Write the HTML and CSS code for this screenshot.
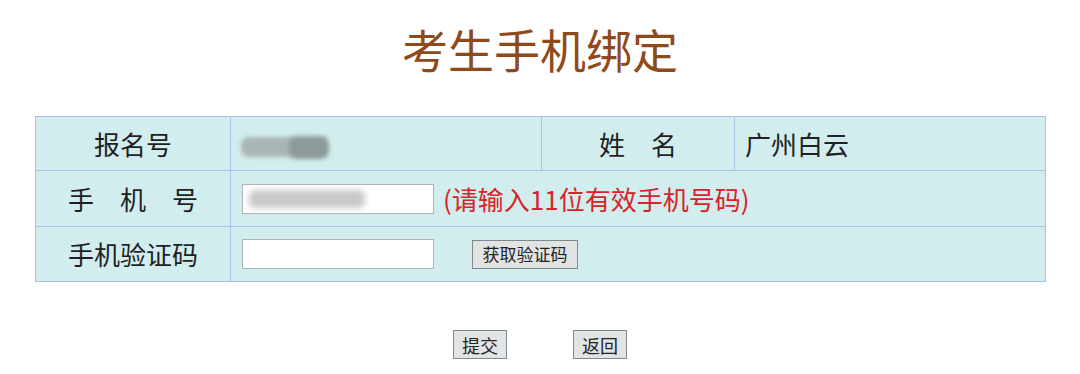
FILE: index.html
```html
<!DOCTYPE html>
<html lang="zh-CN">
<head>
<meta charset="utf-8">
<title>考生手机绑定</title>
<link rel="stylesheet" href="styles.css">
</head>
<body>
<h1 class="title">考生手机绑定</h1>
<table class="form">
  <colgroup>
    <col class="c1"><col class="c2"><col class="c3"><col class="c4">
  </colgroup>
  <tr class="r1">
    <td class="label">报名号</td>
    <td class="value"><span class="blur-id"><span class="blur-a"></span><span class="blur-b"></span></span></td>
    <td class="label">姓　名</td>
    <td class="value">广州白云</td>
  </tr>
  <tr class="r2">
    <td class="label">手　机　号</td>
    <td class="value" colspan="3">
      <div class="line">
        <div class="input"><span class="blur-phone"></span></div>
        <span class="hint">(请输入11位有效手机号码)</span>
      </div>
    </td>
  </tr>
  <tr class="r3">
    <td class="label">手机验证码</td>
    <td class="value" colspan="3">
      <div class="line">
        <div class="input"></div>
        <button class="btn btn-code" type="button">获取验证码</button>
      </div>
    </td>
  </tr>
</table>
<div class="actions">
  <button class="btn btn-act" type="button">提交</button>
  <button class="btn btn-act" type="button">返回</button>
</div>
</body>
</html>
```
FILE: styles.css
```css
html, body {
  margin: 0;
  padding: 0;
  background: #ffffff;
}
body {
  font-family: "Noto Sans CJK SC", "Noto Sans", sans-serif;
  color: #222222;
}
.title {
  margin: 0;
  padding-top: 20px;
  font-size: 46px;
  line-height: 56px;
  font-weight: normal;
  text-align: center;
  color: #8f4a1c;
}
.form {
  margin: 40px 0 0 35px;
  width: 1010px;
  border-collapse: collapse;
  table-layout: fixed;
  background: #d2eded;
  border: 1px solid #b3c6dc;
}
.c1 { width: 195px; }
.c2 { width: 311px; }
.c3 { width: 193px; }
.c4 { width: 311px; }
.form td {
  border: 1px solid #aac0e6;
  padding: 0;
  font-size: 26px;
  line-height: 30px;
}
.r1 td { height: 53px; }
.r2 td { height: 55px; }
.r3 td { height: 54px; }
.label {
  text-align: center;
  color: #1f1f1f;
}
.value {
  padding-left: 10px !important;
  color: #222222;
}
.blur-id {
  display: inline-block;
  position: relative;
  width: 90px;
  height: 24px;
  vertical-align: middle;
}
.blur-a, .blur-b {
  position: absolute;
  top: 2px;
  height: 20px;
  border-radius: 8px;
  filter: blur(2px);
}
.blur-a { left: 0; width: 56px; background: #a9b6b6; }
.blur-b { left: 48px; width: 40px; top: 1px; height: 23px; background: #8e9a9a; }
.line {
  display: flex;
  align-items: center;
  padding-left: 1px;
}
.input {
  position: relative;
  width: 190px;
  height: 28px;
  border: 1px solid #aab4bc;
  background: #ffffff;
  flex: none;
}
.blur-phone {
  position: absolute;
  left: 6px;
  top: 5px;
  width: 116px;
  height: 18px;
  background: #c8c8c8;
  border-radius: 6px;
  filter: blur(3px);
}
.hint {
  margin-left: 9px;
  font-size: 26px;
  color: #d9232a;
}
.btn {
  font-family: "Noto Sans CJK SC", "Noto Sans", sans-serif;
  font-size: 17px;
  line-height: 20px;
  color: #222222;
  background: #e2e4e4;
  border: 1px solid #7f8a8e;
  padding: 0;
  margin: 0;
  border-radius: 0;
}
.btn-code {
  margin-left: 38px;
  width: 106px;
  height: 29px;
}
.actions {
  margin-top: 48px;
  display: flex;
  justify-content: center;
  gap: 66px;
}
.btn-act {
  width: 54px;
  height: 29px;
  font-size: 18px;
}
```
